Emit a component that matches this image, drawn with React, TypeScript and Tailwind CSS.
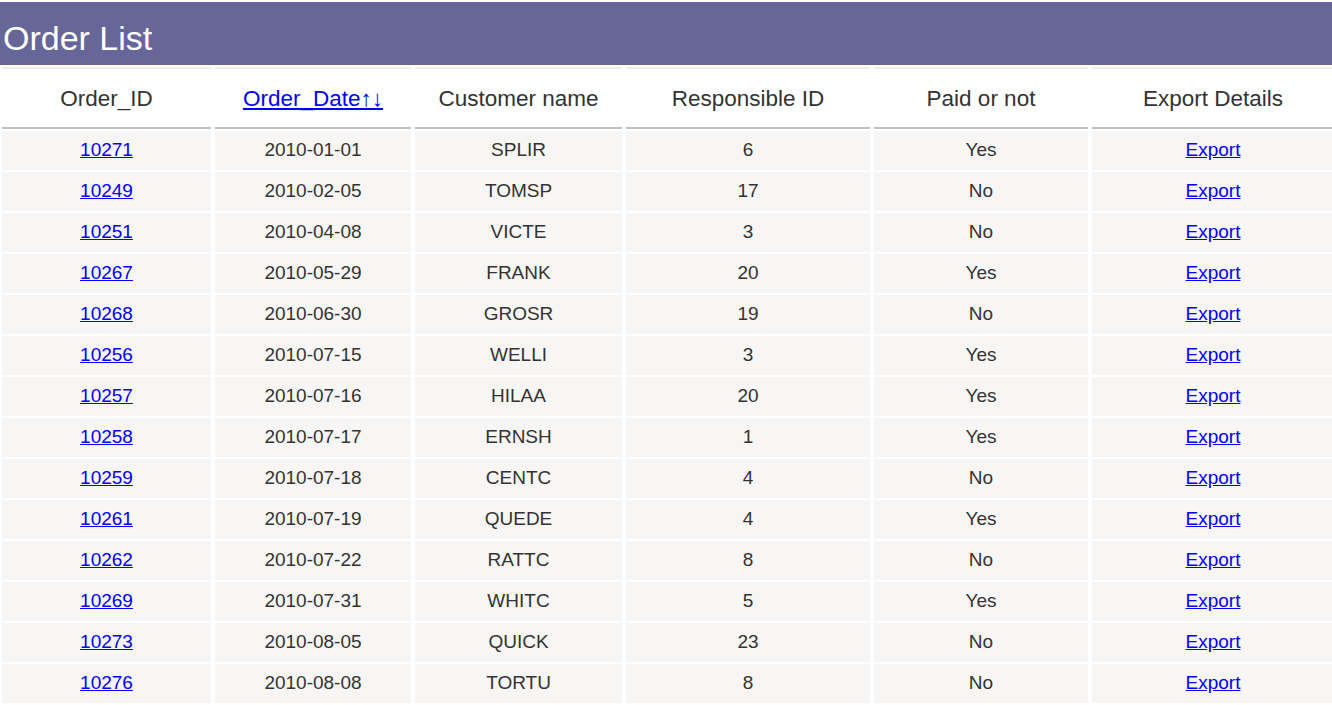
// Order list page: purple title bar + a spaced table of orders.

type Order = {
  id: string;
  date: string;
  customer: string;
  responsible: number;
  paid: boolean;
};

const orders: Order[] = [
  { id: "10271", date: "2010-01-01", customer: "SPLIR", responsible: 6, paid: true },
  { id: "10249", date: "2010-02-05", customer: "TOMSP", responsible: 17, paid: false },
  { id: "10251", date: "2010-04-08", customer: "VICTE", responsible: 3, paid: false },
  { id: "10267", date: "2010-05-29", customer: "FRANK", responsible: 20, paid: true },
  { id: "10268", date: "2010-06-30", customer: "GROSR", responsible: 19, paid: false },
  { id: "10256", date: "2010-07-15", customer: "WELLI", responsible: 3, paid: true },
  { id: "10257", date: "2010-07-16", customer: "HILAA", responsible: 20, paid: true },
  { id: "10258", date: "2010-07-17", customer: "ERNSH", responsible: 1, paid: true },
  { id: "10259", date: "2010-07-18", customer: "CENTC", responsible: 4, paid: false },
  { id: "10261", date: "2010-07-19", customer: "QUEDE", responsible: 4, paid: true },
  { id: "10262", date: "2010-07-22", customer: "RATTC", responsible: 8, paid: false },
  { id: "10269", date: "2010-07-31", customer: "WHITC", responsible: 5, paid: true },
  { id: "10273", date: "2010-08-05", customer: "QUICK", responsible: 23, paid: false },
  { id: "10276", date: "2010-08-08", customer: "TORTU", responsible: 8, paid: false },
];

const widths = [209, 196, 207, 244, 214, 242];

const th =
  "h-[62px] border-t-2 border-b-2 border-t-[#ececec] border-b-[#c0c0c0] bg-white p-0 pt-[2px] text-center align-middle text-[22.5px] font-normal text-[#333333]";
const td = "h-[39px] bg-[#f7f6f4] p-0 text-center align-middle text-[19px] text-[#333333]";
const link = "text-[#0000ff] underline";

export default function App() {
  return (
    <div className="min-h-screen overflow-hidden bg-white font-['Liberation_Sans',Arial,sans-serif]">
      <div className="mt-[2px] h-[63px] bg-[#666699] pl-[3px] pt-[19px] text-[34px] leading-[34px] text-white">
        Order List
      </div>
      <table className="ml-[-2px] w-[1340px] min-w-[1340px] max-w-none table-fixed border-separate border-spacing-x-[4px] border-spacing-y-[2px]">
        <colgroup>
          {widths.map((w, i) => (
            <col key={i} style={{ width: w }} />
          ))}
        </colgroup>
        <thead>
          <tr>
            <th className={th}>Order_ID</th>
            <th className={th}>
              <a href="#" className={link}>
                Order_Date↑↓
              </a>
            </th>
            <th className={th}>Customer name</th>
            <th className={th}>Responsible ID</th>
            <th className={th}>Paid or not</th>
            <th className={th}>Export Details</th>
          </tr>
        </thead>
        <tbody>
          {orders.map((o) => (
            <tr key={o.id}>
              <td className={td}>
                <a href="#" className={link}>
                  {o.id}
                </a>
              </td>
              <td className={td}>{o.date}</td>
              <td className={td}>{o.customer}</td>
              <td className={td}>{o.responsible}</td>
              <td className={td}>{o.paid ? "Yes" : "No"}</td>
              <td className={td}>
                <a href="#" className={link}>
                  Export
                </a>
              </td>
            </tr>
          ))}
        </tbody>
      </table>
    </div>
  );
}
